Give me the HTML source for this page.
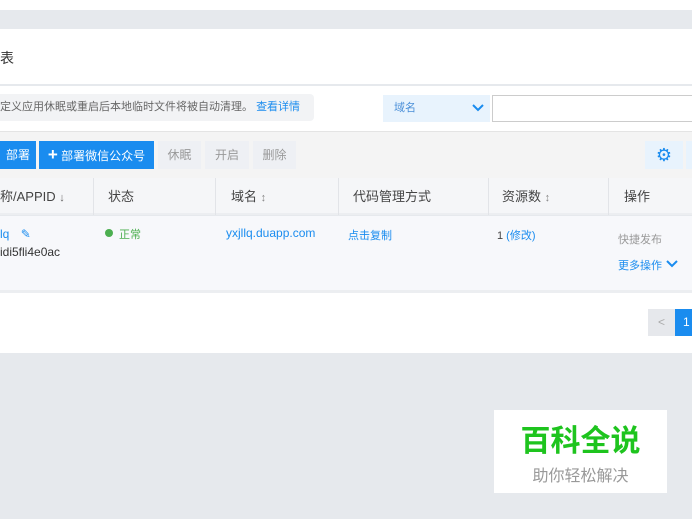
<!DOCTYPE html><html><head><meta charset="utf-8"><style>
*{margin:0;padding:0;box-sizing:border-box}
body{width:692px;height:519px;overflow:hidden;background:#e6e9ed;font-family:"Liberation Sans","Noto Sans CJK SC",sans-serif;position:relative;font-size:12px}
.a{position:absolute}
.btn{position:absolute;top:141px;height:28px;line-height:28px;text-align:center;font-size:12px}
.blue{background:#1a8cef;color:#fff}
.gray{background:#eef0f4;color:#999}
.th{position:absolute;top:178px;height:37px;line-height:37px;font-size:13px;color:#444}
.vl{position:absolute;top:178px;height:37px;width:1px;background:#e2e4e8}
</style></head><body>
<div class="a" style="left:0;top:0;width:692px;height:10px;background:#fff"></div>
<div class="a" style="left:0;top:29px;width:692px;height:55px;background:#fff"></div>
<div class="a" style="left:0;top:48px;font-size:14px;color:#333">表</div>
<div class="a" style="left:0;top:86px;width:692px;height:45px;background:#fff"></div>
<div class="a" style="left:0;top:94px;width:314px;height:27px;background:#f2f3f5;border-radius:0 4px 4px 0;line-height:27px;font-size:11px;color:#666;padding-left:0">定义应用休眠或重启后本地临时文件将被自动清理。 <span style="color:#1a8cef">查看详情</span></div>
<div class="a" style="left:383px;top:95px;width:107px;height:27px;background:#e8f3fd;line-height:27px;font-size:11px;color:#4a8fd8;padding-left:11px">域名</div>
<svg class="a" style="left:472px;top:104px" width="12" height="8"><path d="M1 1L6 6L11 1" stroke="#1a8cef" stroke-width="2" fill="none"/></svg>
<div class="a" style="left:492px;top:95px;width:205px;height:27px;background:#fff;border:1px solid #ccc"></div>
<div class="a" style="left:0;top:131px;width:692px;height:47px;background:#f4f4f4;border-top:1px solid #e4e4e4"></div>
<div class="btn blue" style="left:0;width:36px">部署</div>
<div class="btn blue" style="left:39px;width:115px"><b style="font-size:17px">+</b> 部署微信公众号</div>
<div class="btn gray" style="left:158px;width:43px">休眠</div>
<div class="btn gray" style="left:205px;width:44px">开启</div>
<div class="btn gray" style="left:253px;width:43px">删除</div>
<div class="btn" style="left:645px;width:38px;background:#e8f3fd;color:#1a8cef;font-size:18px">⚙</div>
<div class="a" style="left:686px;top:141px;width:6px;height:28px;background:#e8f3fd"></div>
<div class="a" style="left:0;top:178px;width:692px;height:37px;background:#f5f6f8;border-bottom:2px solid #eceef1"></div>
<div class="vl" style="left:93px"></div><div class="vl" style="left:215px"></div><div class="vl" style="left:338px"></div><div class="vl" style="left:488px"></div><div class="vl" style="left:608px"></div>
<div class="th" style="left:0">称/APPID <span style="font-size:11px;color:#666">↓</span></div>
<div class="th" style="left:108px">状态</div>
<div class="th" style="left:231px">域名 <span style="font-size:11px;color:#888">↕</span></div>
<div class="th" style="left:353px">代码管理方式</div>
<div class="th" style="left:502px">资源数 <span style="font-size:11px;color:#888">↕</span></div>
<div class="th" style="left:624px">操作</div>
<div class="a" style="left:0;top:216px;width:692px;height:74px;background:#f7f8fb"></div>
<div class="a" style="left:0;top:227px;color:#1a8cef;font-size:12px">lq <span style="margin-left:8px">✎</span></div>
<div class="a" style="left:0;top:245px;color:#333;font-size:12px">idi5fli4e0ac</div>
<div class="a" style="left:105px;top:229px;width:8px;height:8px;border-radius:50%;background:#4caf50"></div>
<div class="a" style="left:119px;top:226px;color:#4caf50;font-size:11px">正常</div>
<div class="a" style="left:226px;top:226px;color:#1a8cef;font-size:12px">yxjllq.duapp.com</div>
<div class="a" style="left:348px;top:227px;color:#1a8cef;font-size:11px">点击复制</div>
<div class="a" style="left:497px;top:227px;color:#1a8cef;font-size:11px"><span style="color:#444">1</span> (修改)</div>
<div class="a" style="left:618px;top:231px;color:#999;font-size:11px">快捷发布</div>
<div class="a" style="left:618px;top:257px;color:#1a8cef;font-size:11px">更多操作</div>
<svg class="a" style="left:666px;top:260px" width="12" height="8"><path d="M1 1L6 6L11 1" stroke="#1a8cef" stroke-width="2" fill="none"/></svg>
<div class="a" style="left:0;top:290px;width:692px;height:3px;background:#eceef1"></div>
<div class="a" style="left:0;top:293px;width:692px;height:60px;background:#fff"></div>
<div class="a" style="left:648px;top:309px;width:27px;height:27px;background:#e6e8ec;color:#aaa;text-align:center;line-height:27px">&lt;</div>
<div class="a" style="left:675px;top:309px;width:17px;height:27px;background:#1a8cef;color:#fff;line-height:27px;padding-left:8px">1</div>
<div class="a" style="left:494px;top:410px;width:173px;height:83px;background:#fff"></div>
<div class="a" style="left:494px;top:424px;width:173px;text-align:center;color:#1ec41e;font-size:30px;font-weight:bold;line-height:36px">百科全说</div>
<div class="a" style="left:494px;top:462px;width:173px;text-align:center;color:#999;font-size:16px">助你轻松解决</div>
</body></html>
